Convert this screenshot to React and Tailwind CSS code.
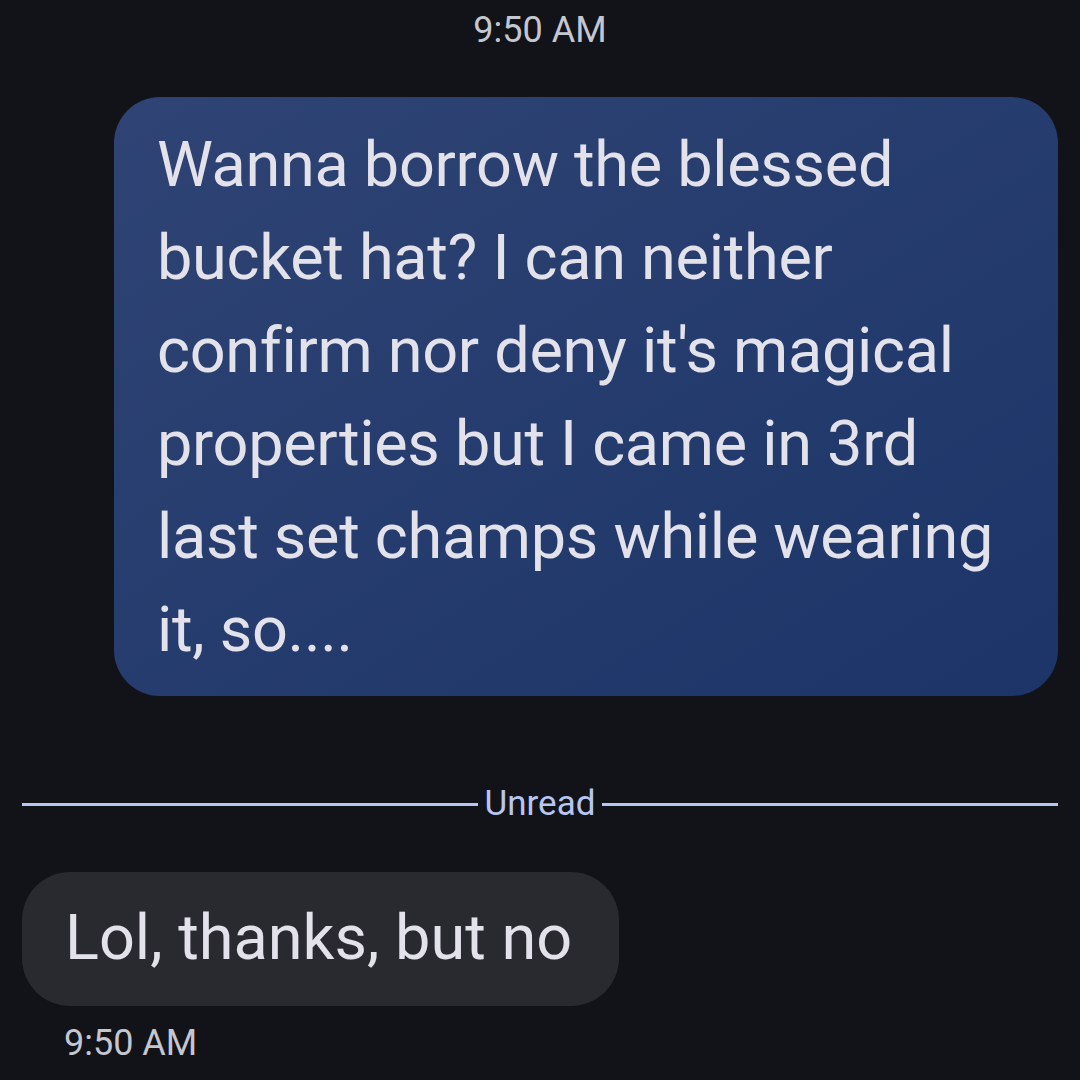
export default function App() {
  return (
    <div className="w-[1080px] h-[1080px] overflow-hidden bg-[#121318] text-[#e3e2ea] font-['Roboto',sans-serif]">
      <div className="pt-[8px] text-center text-[36px] leading-[44px] text-[#c4c6d0]">9:50 AM</div>

      <div className="flex justify-end pr-[22px] mt-[45px]">
        <div className="w-[944px] rounded-[46px] bg-gradient-to-br from-[#2f4474] to-[#1c3468] pl-[43px] pr-[30px] pt-[21px] pb-[20px]">
          <p className="text-[63px] leading-[93px] tracking-[-0.3px]">
            Wanna borrow the blessed bucket hat? I can neither confirm nor deny it's magical properties but I came in 3rd last set champs while wearing it, so....
          </p>
        </div>
      </div>

      <div className="flex items-center gap-[7px] px-[22px] mt-[86px]">
        <div className="flex-1 h-[3px] bg-[#b7c6f0]" />
        <span className="text-[35px] leading-[44px] text-[#b7c6f0]">Unread</span>
        <div className="flex-1 h-[3px] bg-[#b7c6f0]" />
      </div>

      <div className="px-[22px] mt-[46px]">
        <div className="inline-block rounded-[48px] bg-[#292a30] pl-[43px] pr-[47px] pt-[31px] pb-[33px]">
          <span className="text-[63px] leading-[70px]">Lol, thanks, but no</span>
        </div>
        <div className="mt-[15px] pl-[42px] text-[36px] leading-[44px] text-[#c4c6d0]">9:50 AM</div>
      </div>
    </div>
  );
}
